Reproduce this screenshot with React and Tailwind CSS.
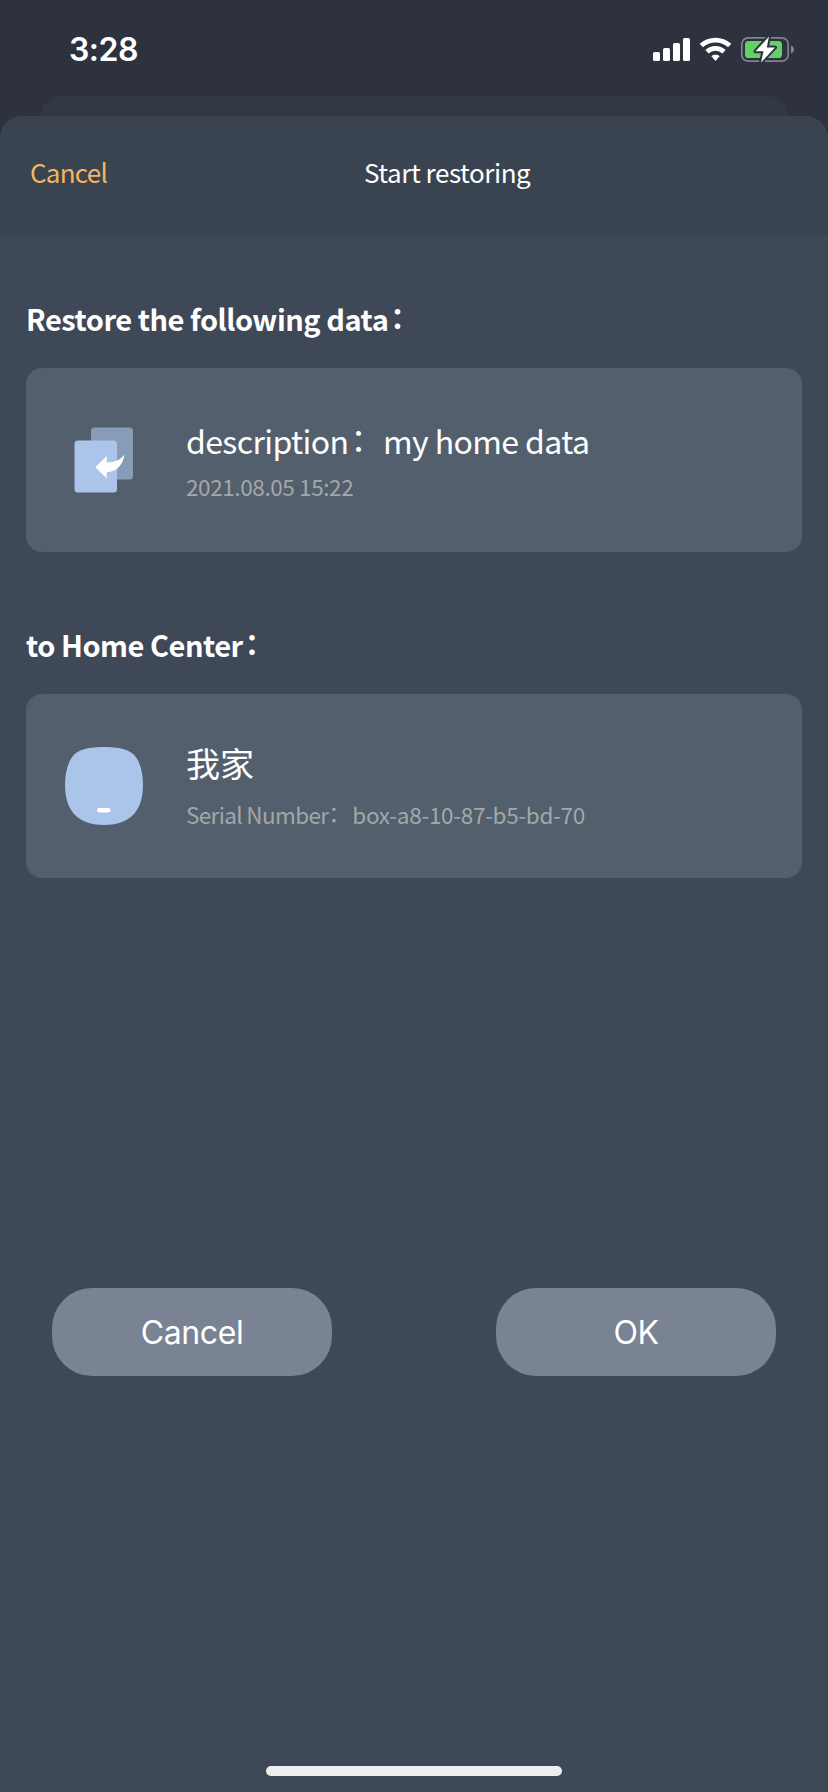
function StatusIcons() {
  return (
    <svg className="h-8 w-[146px]" viewBox="650 34 146 32" fill="none">
      <g fill="#fff">
        <rect x="653" y="52" width="7" height="9" rx="1.6" />
        <rect x="663" y="48" width="7" height="13" rx="1.6" />
        <rect x="673" y="43" width="7" height="18" rx="1.6" />
        <rect x="683" y="38" width="7" height="23" rx="1.6" />
        <path d="M715.5 54.8c1.6 0 3 .5 4.100 1.400L715.500 61l-4.100-4.800c1.100-.9 2.500-1.400 4.100-1.400z" />
      </g>
      <path d="M701.300 45.600a21 21 0 0 1 28.400 0M707 51.700a12.600 12.600 0 0 1 17 0" stroke="#fff" strokeWidth="4.800" />
      <rect x="741.800" y="37.800" width="46.400" height="23.400" rx="6.500" stroke="#80848c" strokeWidth="1.700" />
      <path d="M791 45.500c1.900.6 3 2.200 3 4s-1.100 3.400-3 4z" fill="#80848c" />
      <rect x="745" y="41" width="37" height="17" rx="3.600" fill="#65d067" />
      <path
        d="M769 36.500L755.500 51.300h8L761 62.500l14-15h-8.200z"
        fill="#fff"
        stroke="#2d323e"
        strokeWidth="4"
        strokeLinejoin="round"
        paintOrder="stroke"
      />
    </svg>
  );
}

function RestoreIcon() {
  return (
    <svg className="h-[66px] w-[60px]" viewBox="74 427 60 66">
      <rect x="91" y="427.500" width="42" height="52" rx="3.500" fill="#899cb7" />
      <rect x="74.500" y="440.500" width="42.500" height="52" rx="3.500" fill="#abc4ea" />
      <path d="M95.300 467.300L106.700 456v6.300c7.300.2 13.300-2 17.700-7.600-1.600 10.300-7.700 16.900-17.700 17.600v6z" fill="#fff" />
    </svg>
  );
}

function HomeCenterIcon() {
  return (
    <svg className="size-[78px]" viewBox="0 0 78 78">
      <path
        d="M39 0C58 0 66 4 70 9c6 7 8 19 8 29 0 12-3 22-9 29-7 8-19 11-30 11S16 75 9 67C3 60 0 50 0 38 0 28 2 16 8 9c4-5 12-9 31-9z"
        fill="#abc4ea"
      />
      <rect x="32" y="61" width="13.500" height="4.600" rx="2.300" fill="#fff" />
    </svg>
  );
}

function Card({ icon, children }) {
  return (
    <div className="flex h-[184px] items-center rounded-[16px] bg-[#535f6c]">
      <div className="flex w-[156px] shrink-0 justify-center">{icon}</div>
      <div className="flex flex-col pl-[4px] whitespace-pre">{children}</div>
    </div>
  );
}

function Heading({ children }) {
  return (
    <h2 className="flex h-[44px] items-center text-[29px] leading-[44px] font-bold tracking-[-0.48px] whitespace-pre">
      {children}
      <span className="ml-[2px] pb-[5px]">：</span>
    </h2>
  );
}

function PillButton({ children }) {
  return (
    <button className="h-[88px] w-[280px] rounded-[40px] bg-[#7a8393] pt-px font-[Inter,sans-serif] text-[32px] tracking-[-0.4px]">
      {children}
    </button>
  );
}

export default function App() {
  return (
    <div className="flex h-[1792px] w-[828px] flex-col overflow-hidden bg-[#2d323e] font-['Noto_Sans_CJK_SC',sans-serif] text-white">
      <div className="flex h-24 shrink-0 items-center justify-between pr-8 pl-[69px]">
        <span className="pt-[4px] font-[Inter,sans-serif] text-[32px] font-semibold tracking-[-0.5px]">3:28</span>
        <div className="flex pt-[4px]">
          <StatusIcons />
        </div>
      </div>
      <div className="mx-[41px] h-5 shrink-0 rounded-t-[20px] bg-[#333944]" />
      <div className="flex grow flex-col bg-[linear-gradient(#2d323e_30px,#3f4856_30px)]">
        <header className="grid h-[120px] shrink-0 grid-cols-[364px_1fr] items-center rounded-t-[22px] bg-[#3a4350] pb-[8px] text-[26px] leading-10">
          <span className="pl-[30px] tracking-[-0.75px] text-[#f6b55e]">Cancel</span>
          <span className="tracking-[-0.45px]">Start restoring</span>
        </header>
        <main className="flex grow flex-col px-[26px] pt-[60px]">
          <Heading>Restore the following data</Heading>
          <div className="h-[28px]" />
          <Card icon={<RestoreIcon />}>
            <div className="mb-[4px] flex text-[32px] leading-[48px] tracking-[-0.6px]">
              <span>description</span>
              <span className="-mt-[3px] w-[34.5px] pl-[2px]">：</span>
              <span>my home data</span>
            </div>
            <span className="mb-px text-[22.5px] leading-[36px] tracking-[-0.4px] text-[#a3a7a9]">2021.08.05 15:22</span>
          </Card>
          <div className="h-[70px]" />
          <Heading>to Home Center</Heading>
          <div className="h-[28px]" />
          <Card icon={<HomeCenterIcon />}>
            <span className="mb-[6px] text-[34px] leading-[54px]">我家</span>
            <div className="mb-[4px] flex text-[22.5px] leading-[36px] text-[#a3a7a9]">
              <span className="tracking-[-0.65px]">Serial Number</span>
              <span className="-mt-[2px] w-[24px]">：</span>
              <span className="tracking-[-0.31px]">box-a8-10-87-b5-bd-70</span>
            </div>
          </Card>
          <div className="mt-[410px] flex justify-between px-[26px]">
            <PillButton>Cancel</PillButton>
            <PillButton>OK</PillButton>
          </div>
        </main>
        <div className="mb-4 h-2.5 w-[296px] self-center rounded-full bg-[#eee]" />
      </div>
    </div>
  );
}
